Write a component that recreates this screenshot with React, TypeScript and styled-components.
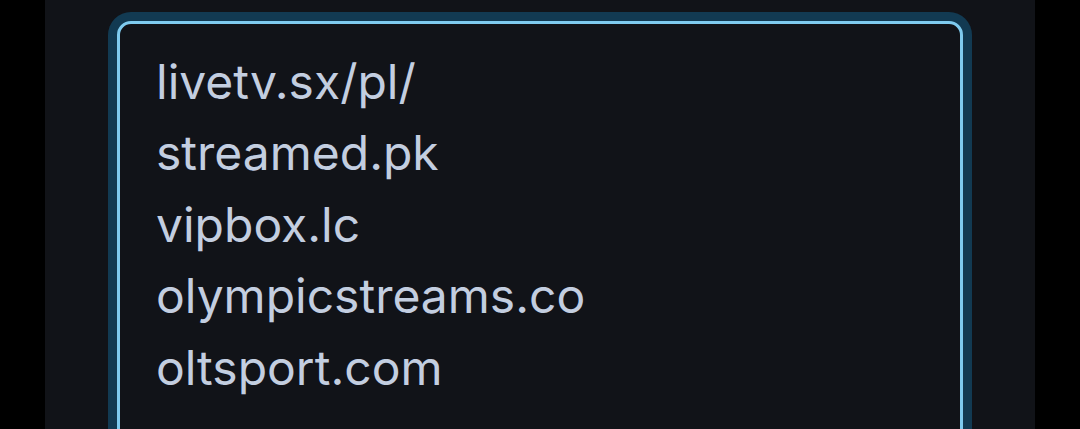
import React from "react";
import styled, { createGlobalStyle } from "styled-components";

const Global = createGlobalStyle`
  html, body { margin: 0; padding: 0; background: #000; }
  body { font-family: Inter, "Noto Sans", sans-serif; overflow: hidden; }
`;

const Page = styled.div`
  width: 1080px;
  height: 429px;
  display: flex;
  background: #000;
  overflow: hidden;
`;

const Panel = styled.div`
  margin-left: 45px;
  width: 990px;
  height: 429px;
  background: #111318;
  box-sizing: border-box;
  padding: 21px 0 0 72px;
`;

const Field = styled.textarea`
  display: block;
  box-sizing: border-box;
  width: 846px;
  height: 480px;
  margin: 0;
  padding: 21.5px 36px;
  background: #111318;
  color: #c3cee0;
  font-family: Inter, "Noto Sans", sans-serif;
  font-size: 48px;
  line-height: 71.6px;
  border: 3px solid #7fcbef;
  border-radius: 14px;
  box-shadow: 0 0 0 9px #123a52;
  outline: none;
  resize: none;
  overflow: hidden;
`;

const sites = [
  "livetv.sx/pl/",
  "streamed.pk",
  "vipbox.lc",
  "olympicstreams.co",
  "oltsport.com",
];

export default function App() {
  return (
    <>
      <Global />
      <Page>
        <Panel>
          <Field readOnly value={sites.join("\n")} />
        </Panel>
      </Page>
    </>
  );
}
